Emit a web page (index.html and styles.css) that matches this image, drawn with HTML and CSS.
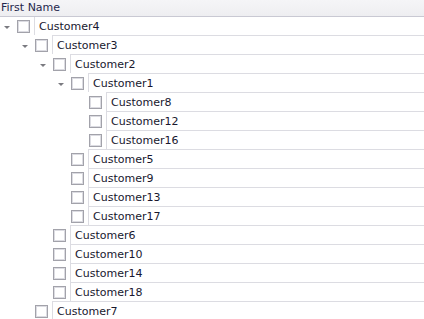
FILE: index.html
```html
<!DOCTYPE html>
<html lang="en">
<head>
    <meta charset="UTF-8">
    <title>Tree List</title>
    <link rel="stylesheet" href="styles.css">
</head>
<body>

<div class="tree-list">
    <div class="tree-header">First Name</div>

    <div class="tree-row lvl-0">
        <span class="expander open"></span><span class="check"></span>
        <div class="cell">Customer4</div>
    </div>
    <div class="tree-row lvl-1">
        <span class="expander open"></span><span class="check"></span>
        <div class="cell">Customer3</div>
    </div>
    <div class="tree-row lvl-2">
        <span class="expander open"></span><span class="check"></span>
        <div class="cell">Customer2</div>
    </div>
    <div class="tree-row lvl-3">
        <span class="expander open"></span><span class="check"></span>
        <div class="cell">Customer1</div>
    </div>
    <div class="tree-row lvl-4">
        <span class="expander"></span><span class="check"></span>
        <div class="cell">Customer8</div>
    </div>
    <div class="tree-row lvl-4">
        <span class="expander"></span><span class="check"></span>
        <div class="cell">Customer12</div>
    </div>
    <div class="tree-row lvl-4">
        <span class="expander"></span><span class="check"></span>
        <div class="cell">Customer16</div>
    </div>
    <div class="tree-row lvl-3">
        <span class="expander"></span><span class="check"></span>
        <div class="cell">Customer5</div>
    </div>
    <div class="tree-row lvl-3">
        <span class="expander"></span><span class="check"></span>
        <div class="cell">Customer9</div>
    </div>
    <div class="tree-row lvl-3">
        <span class="expander"></span><span class="check"></span>
        <div class="cell">Customer13</div>
    </div>
    <div class="tree-row lvl-3">
        <span class="expander"></span><span class="check"></span>
        <div class="cell">Customer17</div>
    </div>
    <div class="tree-row lvl-2">
        <span class="expander"></span><span class="check"></span>
        <div class="cell">Customer6</div>
    </div>
    <div class="tree-row lvl-2">
        <span class="expander"></span><span class="check"></span>
        <div class="cell">Customer10</div>
    </div>
    <div class="tree-row lvl-2">
        <span class="expander"></span><span class="check"></span>
        <div class="cell">Customer14</div>
    </div>
    <div class="tree-row lvl-2">
        <span class="expander"></span><span class="check"></span>
        <div class="cell">Customer18</div>
    </div>
    <div class="tree-row lvl-1">
        <span class="expander"></span><span class="check"></span>
        <div class="cell">Customer7</div>
    </div>
</div>

</body>
</html>
```

FILE: styles.css
```css
body {
    margin: 0;
    background-color: #fff;
    font-family: 'DejaVu Sans', Tahoma, sans-serif;
    font-size: 11px;
    color: #18182e;
    overflow: hidden;
}

.tree-list {
    width: 424px;
    height: 319px;
    overflow: hidden;
}

.tree-header {
    height: 16px;
    line-height: 15px;
    padding-left: 1px;
    color: #25284d;
    background: linear-gradient(#f5f5f7, #eeeef1);
    border-bottom: 1px solid #c9c9d3;
}

.tree-row {
    display: flex;
    align-items: flex-start;
    height: 18px;
}

.lvl-1 { padding-left: 18px; }
.lvl-2 { padding-left: 36px; }
.lvl-3 { padding-left: 54px; }
.lvl-4 { padding-left: 72px; }

.expander {
    flex: 0 0 17px;
    height: 18px;
    position: relative;
}

/* small down arrow for expanded nodes */
.expander.open::after {
    content: '';
    position: absolute;
    left: 4px;
    top: 9px;
    border-left: 3px solid transparent;
    border-right: 3px solid transparent;
    border-top: 3px solid #7a7a80;
}

.check {
    flex: 0 0 13px;
    height: 13px;
    box-sizing: border-box;
    margin: 3px 4px 0 0;
    border: 1px solid #a2a2aa;
    background-color: #fff;
    box-shadow: inset 0 0 0 1px #dcdce2;
}

.cell {
    flex: 1;
    height: 17px;
    padding: 1px 0 0 4px;
    line-height: 18px;
    border-left: 1px solid #dcdce2;
    white-space: nowrap;
}

.tree-row + .tree-row {
    height: 19px;
}

.tree-row + .tree-row .cell {
    border-top: 1px solid #dcdce2;
}

.tree-row + .tree-row .expander {
    margin-top: 1px;
}

.tree-row + .tree-row .check {
    margin-top: 4px;
}
```
